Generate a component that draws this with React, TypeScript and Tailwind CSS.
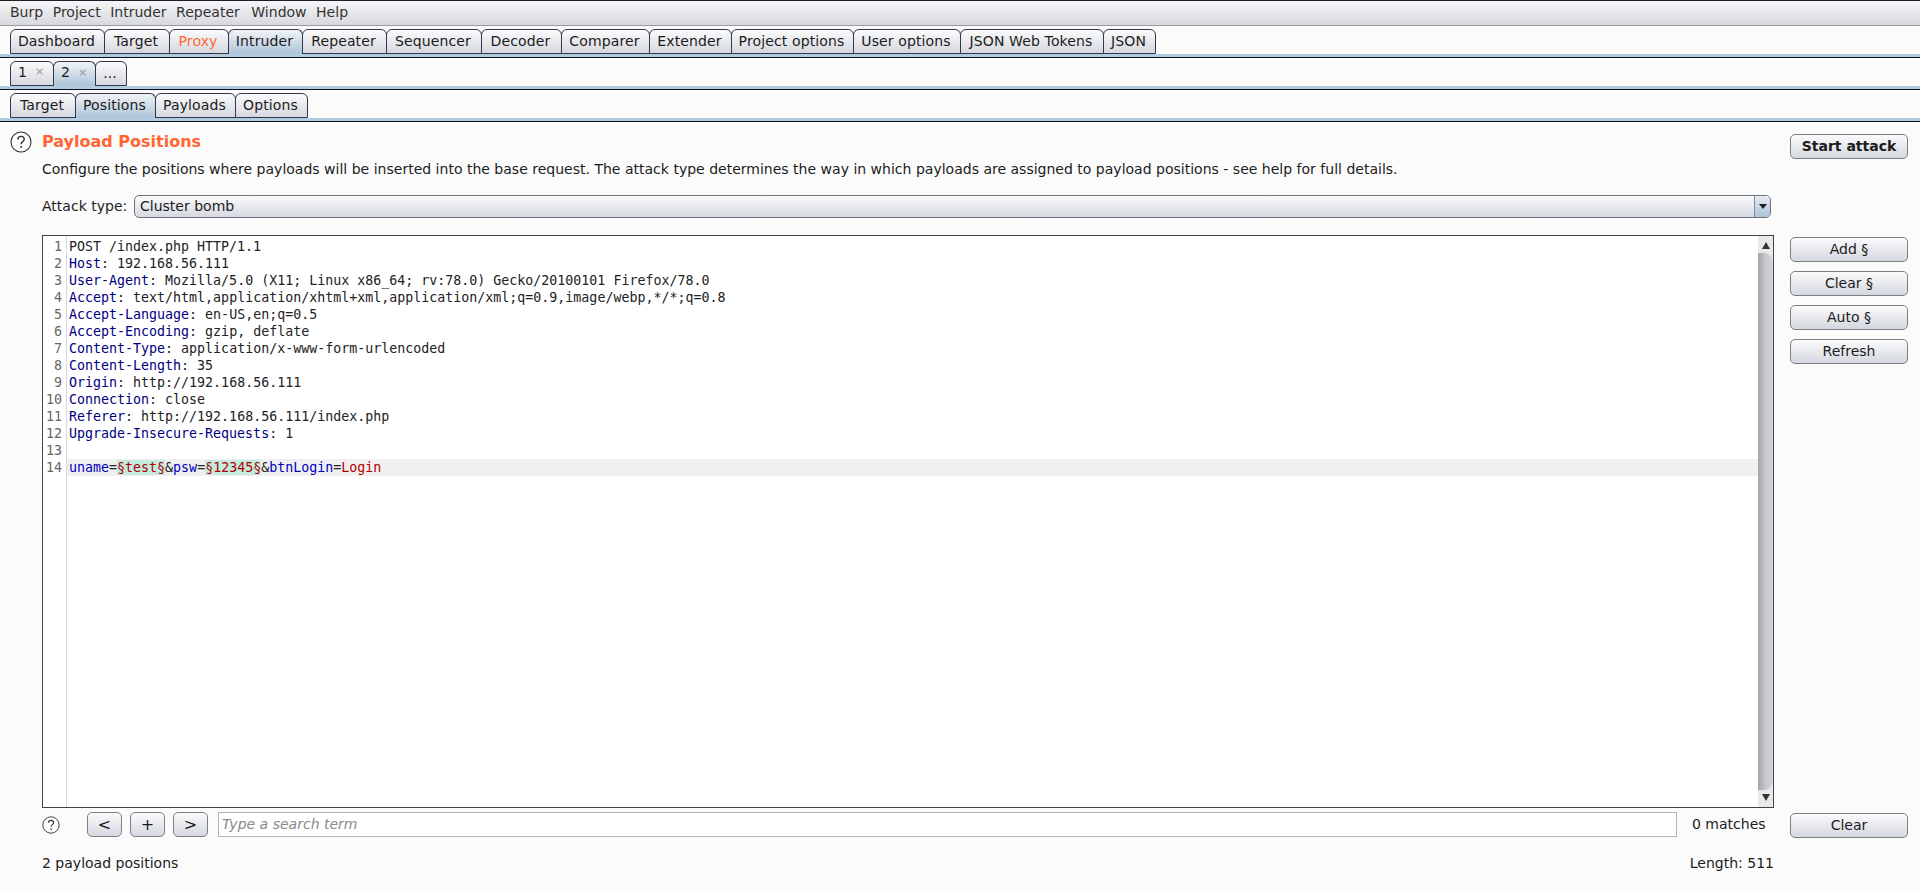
import React from "react";

const topTabs: [string, number][] = [["Dashboard",95],["Target",66],["Proxy",60],["Intruder",75],["Repeater",85],["Sequencer",96],["Decoder",81],["Comparer",89],["Extender",83],["Project options",123],["User options",108],["JSON Web Tokens",144],["JSON",53]];

function Tab({ w, label, active, orange, left, children }: { w: number; label: string; active?: boolean; orange?: boolean; left?: boolean; children?: React.ReactNode }) {
  return (
    <div
      style={{ width: w }}
      className={`relative -mr-px flex h-[25px] shrink-0 items-center whitespace-nowrap rounded-t-[6px] border border-[#30384a] tracking-[0.12px] ${left ? "justify-start pb-[2px] pl-[7px]" : "justify-center pr-[2px]"} ${active ? "z-10 border-b-0 bg-gradient-to-b from-[#f2f4f6] to-[#acc4d9]" : "bg-gradient-to-b from-[#fbfbfc] to-[#d5d8df]"} ${active && !left ? "pb-[1px]" : ""} ${orange ? "text-[#ff6633]" : "text-[#1c1c1c]"}`}
    >
      {label}
      {children}
    </div>
  );
}

function Strip() {
  return <div className="h-[4px] shrink-0 border-b border-[#0b1020] bg-[#b3cbdf]" />;
}

function Btn({ children, className = "" }: { children: React.ReactNode; className?: string }) {
  return (
    <div className={`flex h-[25px] shrink-0 items-center justify-center rounded-[5px] border border-[#7d7f85] bg-gradient-to-b from-[#fbfbfc] to-[#d5d8e0] text-[#1c1c1c] ${className}`}>
      {children}
    </div>
  );
}

function Help({ size }: { size: number }) {
  return (
    <svg width={size} height={size} viewBox="0 0 22 22" fill="none" className="shrink-0">
      <circle cx="11" cy="11" r="10" stroke="#333" strokeWidth="1.1" fill="#fdfdfd" />
      <path d="M7.9 8.4c0-1.9 1.4-3 3.2-3s3.1 1.1 3.1 2.8c0 2.4-3.1 2.4-3.1 5" stroke="#333" strokeWidth="1.4" />
      <circle cx="11.1" cy="16" r="1" fill="#333" />
    </svg>
  );
}

const N = "text-[#000080]";
const headers: [string, string][] = [
  ["Host", "192.168.56.111"],
  ["User-Agent", "Mozilla/5.0 (X11; Linux x86_64; rv:78.0) Gecko/20100101 Firefox/78.0"],
  ["Accept", "text/html,application/xhtml+xml,application/xml;q=0.9,image/webp,*/*;q=0.8"],
  ["Accept-Language", "en-US,en;q=0.5"],
  ["Accept-Encoding", "gzip, deflate"],
  ["Content-Type", "application/x-www-form-urlencoded"],
  ["Content-Length", "35"],
  ["Origin", "http://192.168.56.111"],
  ["Connection", "close"],
  ["Referer", "http://192.168.56.111/index.php"],
  ["Upgrade-Insecure-Requests", "1"],
];

function Line({ n, children, hl }: { n: number; children?: React.ReactNode; hl?: boolean }) {
  return (
    <div className={`flex h-[17px] shrink-0 leading-[17px] ${hl ? "bg-[#f0f0f0]" : ""}`}>
      <div className="w-[24px] shrink-0 border-r border-[#d8d8d8] bg-white pr-[4px] text-right text-[#666]">{n}</div>
      <div className="whitespace-pre pl-[2px] text-[#222]">{children}</div>
    </div>
  );
}

export default function App() {
  return (
    <div className="flex h-[892px] w-[1920px] flex-col overflow-hidden bg-[#fbfbfb] font-['DejaVu_Sans',sans-serif] text-[14.03px] text-[#1c1c1c]">
      <div className="flex h-[26px] shrink-0 items-center gap-[9.5px] border-t border-b border-t-[#1a1e2a] border-b-[#9a9a9a] bg-gradient-to-b from-[#f6f6f7] to-[#d7d9de] pb-[1px] pl-[10px] text-[#333]">
        {["Burp", "Project", "Intruder", "Repeater"].map((m) => (
          <span key={m}>{m}</span>
        ))}
        <span className="ml-[2px]">Window</span>
        <span>Help</span>
      </div>

      <div className="flex h-[28px] shrink-0 items-end pl-[10px]">
        {topTabs.map(([l, w]) => (
          <Tab key={l} w={w} label={l} active={l === "Intruder"} orange={l === "Proxy"} />
        ))}
      </div>
      <Strip />

      <div className="flex h-[28px] shrink-0 items-end pl-[10px]">
        <Tab w={44} label="1" left><span className="ml-[8px] text-[11px] text-[#999]">×</span></Tab>
        <Tab w={43} label="2" left active><span className="ml-[8px] text-[11px] text-[#999]">×</span></Tab>
        <Tab w={32} label="..." />
      </div>
      <Strip />

      <div className="flex h-[28px] shrink-0 items-end pl-[10px]">
        <Tab w={66} label="Target" />
        <Tab w={81} label="Positions" active />
        <Tab w={81} label="Payloads" />
        <Tab w={73} label="Options" />
      </div>
      <Strip />

      <div className="flex min-h-0 flex-1">
        <div className="flex w-[1774px] shrink-0 flex-col pl-[10px]">
          <div className="flex h-[39px] shrink-0 items-center">
            <Help size={22} />
            <span className="ml-[10px] text-[16px] font-bold text-[#ff6633]">Payload Positions</span>
          </div>
          <div className="h-[17px] shrink-0 pl-[32px] leading-[17px]">
            Configure the positions where payloads will be inserted into the base request. The attack type determines the way in which payloads are assigned to payload positions - see help for full details.
          </div>
          <div className="mt-[17px] flex h-[23px] shrink-0 items-center pl-[32px] pr-[3px]">
            <span className="w-[92px] shrink-0 whitespace-nowrap">Attack type:</span>
            <div className="flex h-[23px] flex-1 items-center overflow-hidden rounded-[5px] border border-[#6f737b] bg-gradient-to-b from-[#fbfbfc] to-[#d5d8e0] pl-[5px]">
              <span className="flex-1">Cluster bomb</span>
              <div className="flex h-full w-[16px] items-center justify-center border-l border-[#7d8a99] bg-gradient-to-b from-[#e6ebf0] to-[#acc4d9]">
                <svg width="8" height="5" viewBox="0 0 8 5"><path d="M0 0h8L4 5z" fill="#222" /></svg>
              </div>
            </div>
          </div>

          <div className="ml-[32px] mt-[17px] flex h-[573px] shrink-0 border border-[#444] bg-white font-['DejaVu_Sans_Mono',monospace] text-[13.3px]">
            <div className="relative flex-1 overflow-hidden">
              <div className="flex h-full flex-col">
                <div className="h-[2px] w-[24px] shrink-0 border-r border-[#d8d8d8]" />
                <Line n={1}>POST /index.php HTTP/1.1</Line>
                {headers.map(([k, v], i) => (
                  <Line key={k} n={i + 2}><span className={N}>{k}</span>: {v}</Line>
                ))}
                <Line n={13} />
                <Line n={14} hl>
                  <span className="text-[#0000c0]">uname</span>=<span className="bg-[#c3ebdf] text-[#b00000]">§test§</span>&amp;<span className="text-[#0000c0]">psw</span>=<span className="bg-[#c3ebdf] text-[#b00000]">§12345§</span>&amp;<span className="text-[#0000c0]">btnLogin</span>=<span className="text-[#b00000]">Login</span>
                </Line>
                <div className="w-[24px] flex-1 border-r border-[#d8d8d8]" />
              </div>
            </div>
            <div className="flex w-[15px] shrink-0 flex-col bg-[#e9e9ea]">
              <div className="flex h-[17px] shrink-0 items-center justify-center pt-[2px]">
                <svg width="8" height="7" viewBox="0 0 8 7"><path d="M4 0l4 7H0z" fill="#333" /></svg>
              </div>
              <div className="flex-1 rounded-tr-[9px] rounded-br-[9px] bg-gradient-to-r from-[#a4a5aa] via-[#c6c7cc] to-[#d4d5d9]" />
              <div className="flex h-[17px] shrink-0 items-center justify-center pb-[2px]">
                <svg width="8" height="7" viewBox="0 0 8 7"><path d="M0 0h8L4 7z" fill="#333" /></svg>
              </div>
            </div>
          </div>

          <div className="ml-[32px] mt-[4px] flex h-[25px] shrink-0 items-center">
            <Help size={18} />
            <Btn className="ml-[27px] w-[35px] text-[16px]">&lt;</Btn>
            <Btn className="ml-[8px] w-[35px] text-[16px]">+</Btn>
            <Btn className="ml-[8px] w-[35px] text-[16px]">&gt;</Btn>
            <div className="ml-[10px] flex h-[25px] w-[1459px] shrink-0 items-center border border-[#b5b5b5] bg-white pl-[3px] italic text-[#8a8a8a]">Type a search term</div>
            <span className="ml-[15px] whitespace-nowrap">0 matches</span>
          </div>
          <div className="ml-[32px] mt-[18px] flex justify-between leading-[17px]">
            <span>2 payload positions</span>
            <span>Length: 511</span>
          </div>
        </div>

        <div className="ml-[16px] flex w-[118px] shrink-0 flex-col pt-[12px]">
          <Btn className="font-bold">Start attack</Btn>
          <div className="mt-[78px] flex flex-col gap-[9px]">
            <Btn>Add §</Btn>
            <Btn>Clear §</Btn>
            <Btn>Auto §</Btn>
            <Btn>Refresh</Btn>
          </div>
          <Btn className="mt-[449px]">Clear</Btn>
        </div>
      </div>
    </div>
  );
}
